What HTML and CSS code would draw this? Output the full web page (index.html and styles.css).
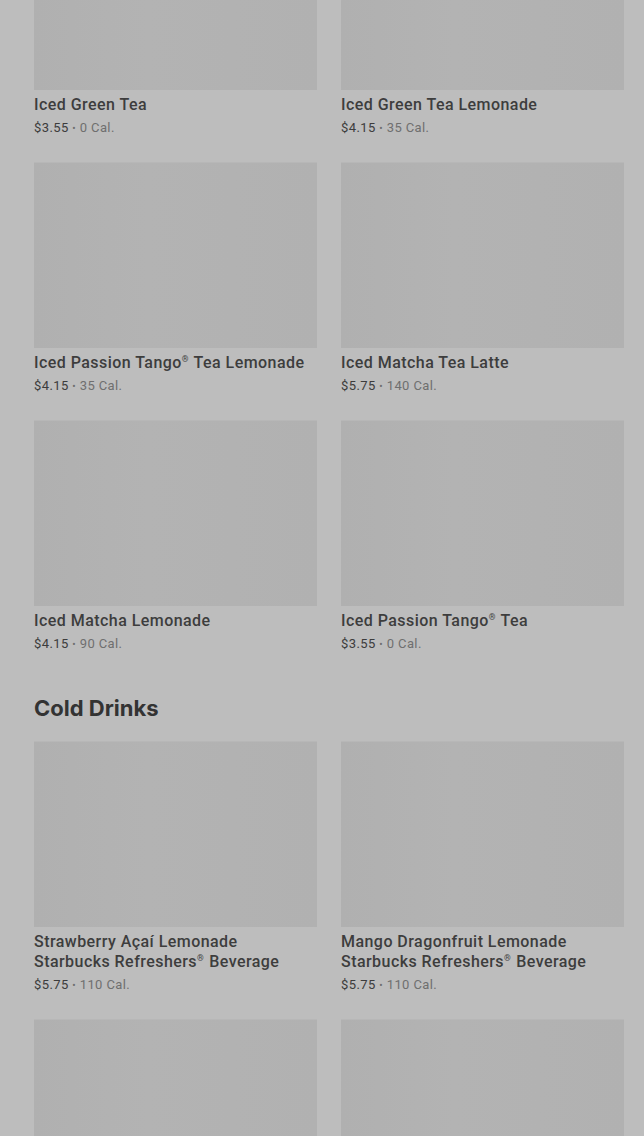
FILE: index.html
```html
<!DOCTYPE html>
<html lang="en">
<head>
<meta charset="utf-8">
<title>Menu</title>
<link rel="stylesheet" href="styles.css">
</head>
<body>
<main class="page">
  <section class="section first">
    <div class="grid">
      <div class="card"><div class="thumb"></div><div class="name">Iced Green Tea</div><div class="meta"><span class="price">$3.55</span> <span class="cal"><span class="dot">•</span> 0 Cal.</span></div></div>
      <div class="card"><div class="thumb"></div><div class="name">Iced Green Tea Lemonade</div><div class="meta"><span class="price">$4.15</span> <span class="cal"><span class="dot">•</span> 35 Cal.</span></div></div>
      <div class="card"><div class="thumb"></div><div class="name">Iced Passion Tango<sup class="reg">®</sup> Tea Lemonade</div><div class="meta"><span class="price">$4.15</span> <span class="cal"><span class="dot">•</span> 35 Cal.</span></div></div>
      <div class="card"><div class="thumb"></div><div class="name">Iced Matcha Tea Latte</div><div class="meta"><span class="price">$5.75</span> <span class="cal"><span class="dot">•</span> 140 Cal.</span></div></div>
      <div class="card"><div class="thumb"></div><div class="name">Iced Matcha Lemonade</div><div class="meta"><span class="price">$4.15</span> <span class="cal"><span class="dot">•</span> 90 Cal.</span></div></div>
      <div class="card"><div class="thumb"></div><div class="name">Iced Passion Tango<sup class="reg">®</sup> Tea</div><div class="meta"><span class="price">$3.55</span> <span class="cal"><span class="dot">•</span> 0 Cal.</span></div></div>
    </div>
  </section>
  <section class="section">
    <h2 class="heading">Cold Drinks</h2>
    <div class="grid">
      <div class="card"><div class="thumb"></div><div class="name"><span class="line">Strawberry Açaí Lemonade</span><span class="line">Starbucks Refreshers<sup class="reg">®</sup> Beverage</span></div><div class="meta"><span class="price">$5.75</span> <span class="cal"><span class="dot">•</span> 110 Cal.</span></div></div>
      <div class="card"><div class="thumb"></div><div class="name"><span class="line">Mango Dragonfruit Lemonade</span><span class="line">Starbucks Refreshers<sup class="reg">®</sup> Beverage</span></div><div class="meta"><span class="price">$5.75</span> <span class="cal"><span class="dot">•</span> 110 Cal.</span></div></div>
      <div class="card"><div class="thumb"></div><div class="name"></div><div class="meta"></div></div>
      <div class="card"><div class="thumb"></div><div class="name"></div><div class="meta"></div></div>
    </div>
  </section>
</main>
</body>
</html>
```
FILE: styles.css
```css
html, body {
  margin: 0;
  padding: 0;
  background: #bdbdbd;
  overflow: hidden;
}
body {
  font-family: Roboto, "Liberation Sans", sans-serif;
  color: #3a3a3a;
}
.page {
  padding: 0 20px 0 34px;
  height: 1136px;
  overflow: hidden;
}
.section.first {
  margin-top: -96px;
}
.grid {
  display: grid;
  grid-template-columns: 283px 283px;
  column-gap: 24px;
  row-gap: 24px;
}
.card {
  display: flex;
  flex-direction: column;
}
.thumb {
  height: 186px;
  background: linear-gradient(90deg, #b0b0b0 0%, #b3b3b3 40%, #b1b1b1 100%);
  border-top: 1px solid #b7b7b7;
  box-sizing: border-box;
}
.name {
  margin-top: 5px;
  font-size: 16px;
  line-height: 20px;
  font-weight: 500;
  color: #3d3d3d;
  letter-spacing: 0.45px;
  min-height: 20px;
  padding-right: 4px;
}
.line {
  display: block;
}
.reg {
  font-size: 8.5px;
  line-height: 0;
  vertical-align: 6px;
  margin: 0 1px 0 0;
  letter-spacing: 0;
}
.meta {
  margin-top: 3px;
  font-size: 13px;
  line-height: 20px;
  height: 20px;
  letter-spacing: 0.4px;
}
.price {
  color: #3c3c3c;
}
.cal {
  color: #6f6f6f;
}
.dot {
  font-size: 10px;
}
.heading {
  margin: 40px 0 19px;
  font-family: Inter, "Liberation Sans", sans-serif;
  font-size: 22px;
  line-height: 28px;
  font-weight: 700;
  color: #333333;
  letter-spacing: 0px;
}
```
